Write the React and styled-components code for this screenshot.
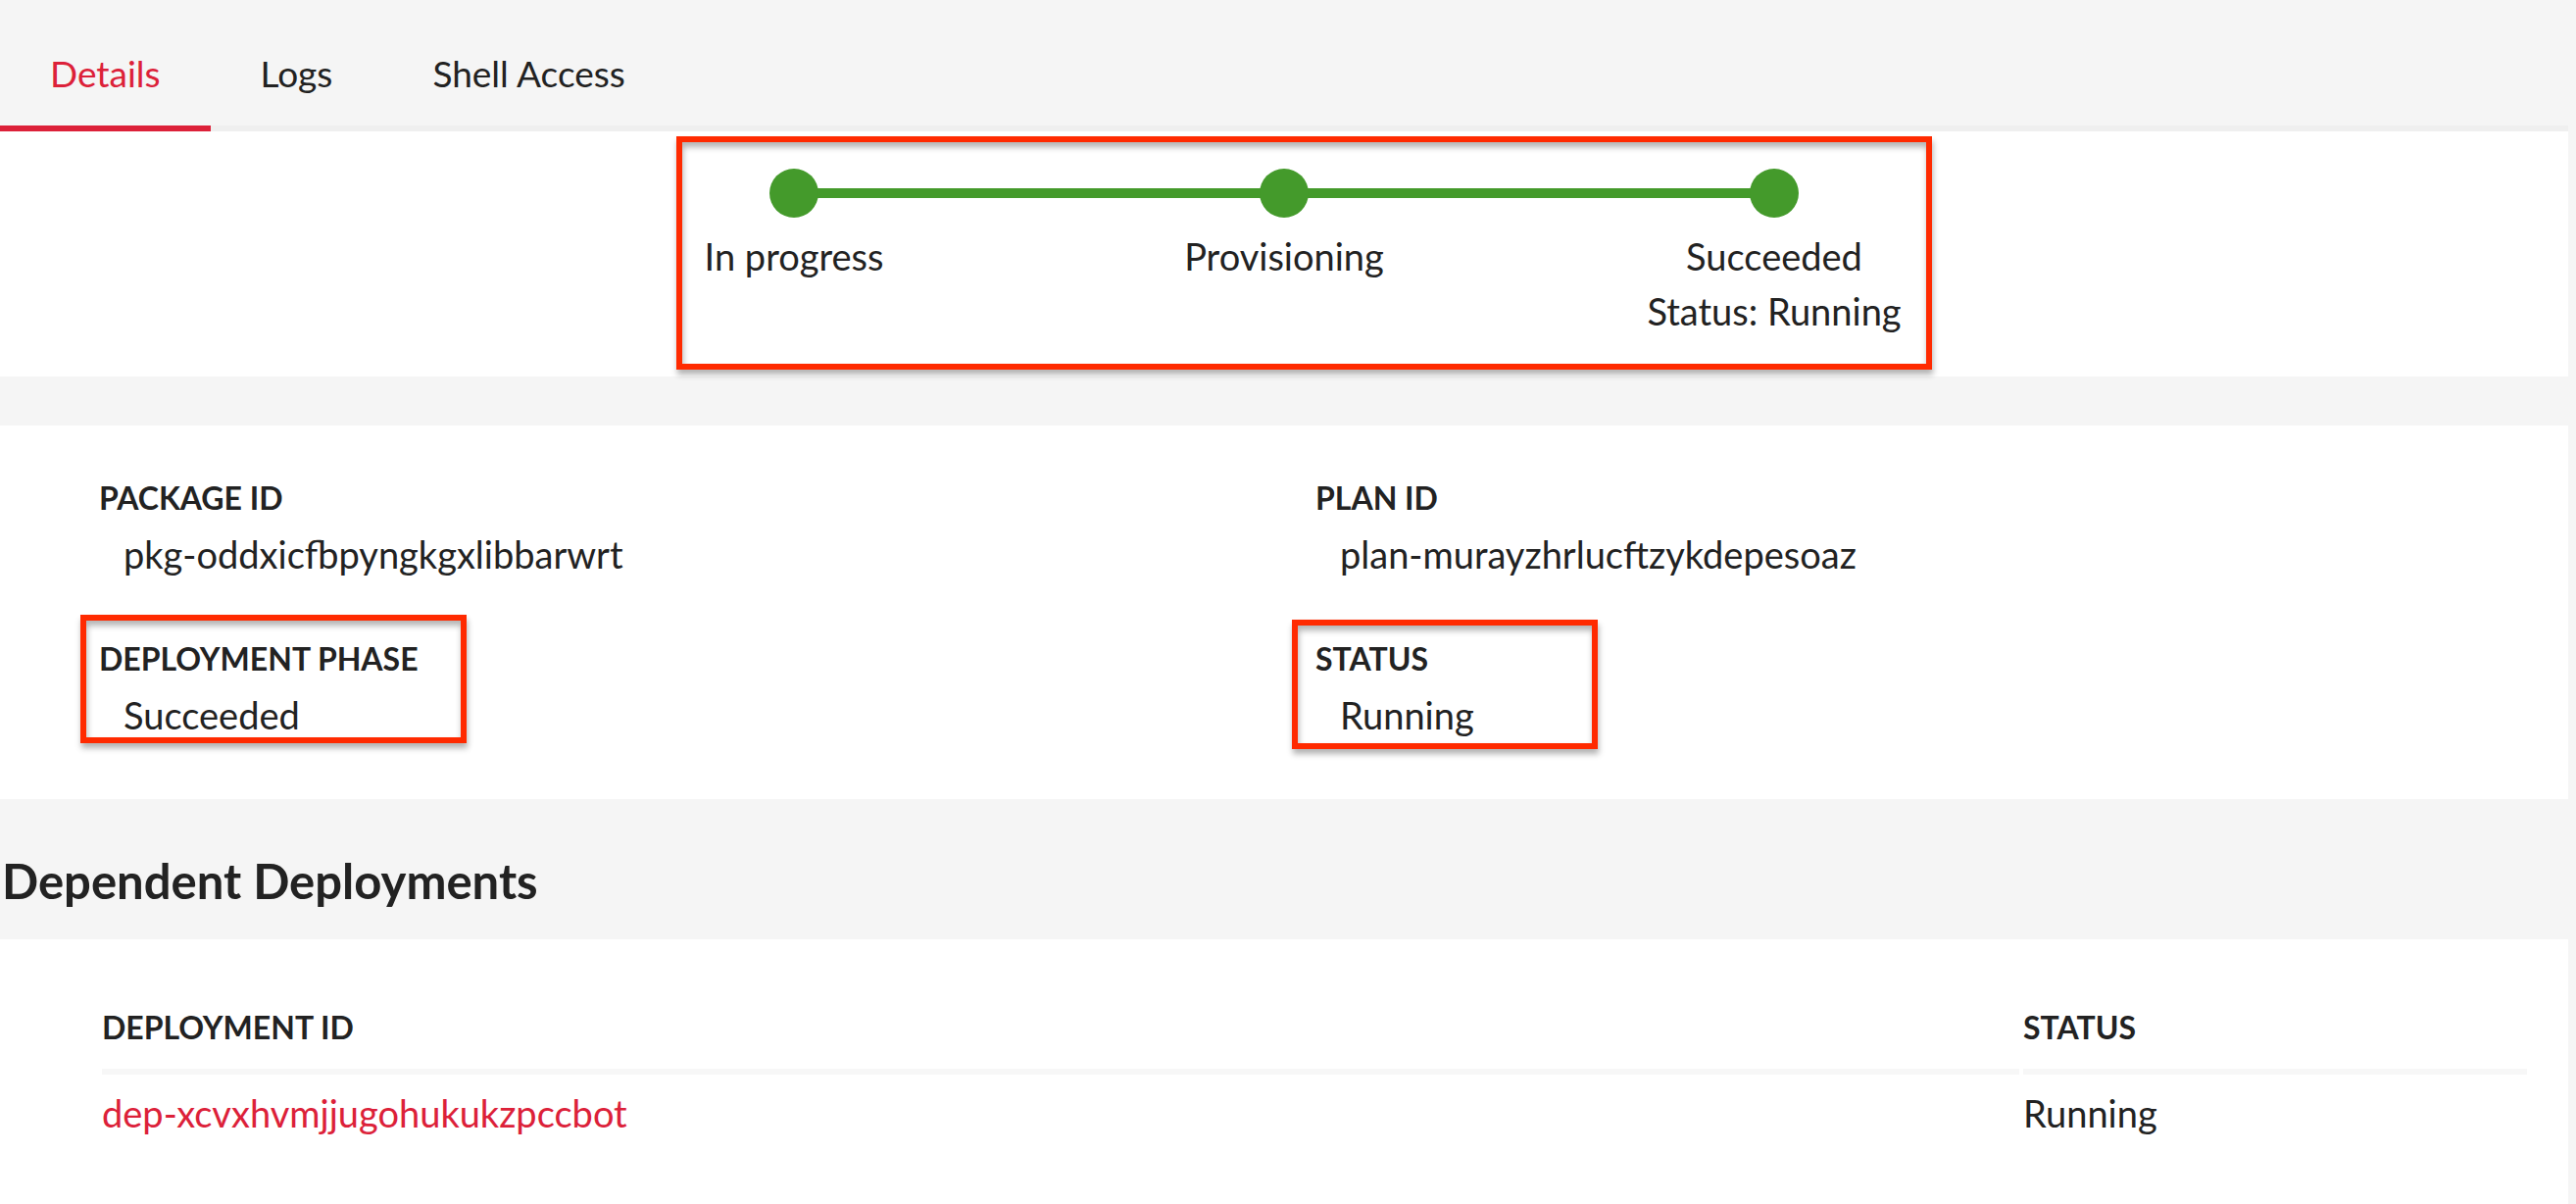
import React from 'react';
import styled, { createGlobalStyle } from 'styled-components';

const RED = '#dc2139';
const GREEN = '#449a2b';
const INK = '#222222';

const GlobalStyle = createGlobalStyle`
  html, body {
    margin: 0;
    padding: 0;
    background: #f5f5f5;
  }
  body {
    font-family: Lato, "Open Sans", sans-serif;
    color: ${INK};
  }
  * { box-sizing: border-box; }
`;

const Page = styled.div`
  width: 2620px;
  min-height: 1228px;
  background: #f5f5f5;
`;

const TabBar = styled.nav`
  display: flex;
  height: 134px;
  border-bottom: 6px solid #efefef;
  background: #f5f5f5;
`;

const Tab = styled.a`
  display: block;
  padding: 51px 51px 0;
  margin-bottom: -6px;
  border-bottom: 6px solid ${p => (p.$active ? RED : 'transparent')};
  color: ${p => (p.$active ? RED : INK)};
  font-size: 37px;
  line-height: 48px;
  text-decoration: none;
  cursor: pointer;
`;

/* annotation box drawn over content */
const highlight = `
  content: '';
  position: absolute;
  border: 6px solid #ff2a00;
  box-shadow: 1px 5px 6px rgba(0, 0, 0, 0.3), inset 1px 5px 6px rgba(0, 0, 0, 0.3);
  pointer-events: none;
`;

const TimelineCard = styled.section`
  height: 250px;
  background: #fff;
  padding-top: 38px;
  display: flex;
  align-items: flex-start;
  justify-content: center;
`;

const Stepper = styled.ol`
  position: relative;
  display: grid;
  grid-template-columns: repeat(3, 500px);
  margin: 0;
  padding: 0;
  list-style: none;

  &::before {
    content: '';
    position: absolute;
    top: 20px;
    left: 250px;
    right: 250px;
    height: 10px;
    background: ${GREEN};
  }

  &::after {
    ${highlight}
    left: 130px;
    right: 89px;
    top: -33px;
    bottom: -32px;
  }
`;

const Step = styled.li`
  position: relative;
  display: flex;
  flex-direction: column;
  align-items: center;
`;

const Dot = styled.span`
  width: 50px;
  height: 50px;
  border-radius: 50%;
  background: ${GREEN};
`;

const StepLabel = styled.span`
  margin-top: 11px;
  font-size: 38px;
  line-height: 56px;
  text-align: center;
`;

const Gap = styled.div`
  height: 50px;
`;

const DetailsCard = styled.section`
  height: 381px;
  background: #fff;
  padding: 54px 0 0 101px;
  display: grid;
  grid-template-columns: 1241px 1fr;
`;

const Column = styled.div`
  display: flex;
  flex-direction: column;
  gap: 63px;
`;

const Field = styled.div`
  position: relative;

  ${p =>
    p.$box &&
    `
    &::after {
      ${highlight}
      left: ${p.$box.left}px;
      width: ${p.$box.width}px;
      top: ${p.$box.top}px;
      bottom: ${p.$box.bottom}px;
    }
  `}
`;

const Label = styled.div`
  font-size: 32px;
  line-height: 40px;
  font-weight: 700;
  text-transform: uppercase;
`;

const Value = styled.div`
  margin-top: 13px;
  padding-left: 25px;
  font-size: 38px;
  line-height: 48px;
`;

const SectionTitle = styled.h2`
  height: 143px;
  margin: 0;
  padding: 53px 0 0 2px;
  font-size: 49px;
  line-height: 60px;
  font-weight: 700;
`;

const TableCard = styled.section`
  background: #fff;
  min-height: 270px;
  padding: 70px 42px 40px 104px;
`;

const Row = styled.div`
  display: grid;
  grid-template-columns: 1956px 1fr;
  column-gap: 4px;
`;

const HeadCell = styled.div`
  padding-bottom: 22px;
  border-bottom: 6px solid #f7f7f7;
  font-size: 32px;
  line-height: 40px;
  font-weight: 700;
  text-transform: uppercase;
`;

const Cell = styled.div`
  padding-top: 15px;
  font-size: 38px;
  line-height: 48px;
  color: ${p => (p.$link ? RED : INK)};
`;

const steps = [
  { label: 'In progress' },
  { label: 'Provisioning' },
  { label: 'Succeeded', extra: 'Status: Running' },
];

export default function App() {
  return (
    <Page>
      <GlobalStyle />
      <TabBar>
        <Tab $active>Details</Tab>
        <Tab>Logs</Tab>
        <Tab>Shell Access</Tab>
      </TabBar>

      <TimelineCard>
        <Stepper>
          {steps.map(s => (
            <Step key={s.label}>
              <Dot />
              <StepLabel>
                {s.label}
                {s.extra && <br />}
                {s.extra}
              </StepLabel>
            </Step>
          ))}
        </Stepper>
      </TimelineCard>

      <Gap />

      <DetailsCard>
        <Column>
          <Field>
            <Label>Package ID</Label>
            <Value>pkg-oddxicfbpyngkgxlibbarwrt</Value>
          </Field>
          <Field $box={{ left: -19, width: 382, top: -25, bottom: -5 }}>
            <Label>Deployment Phase</Label>
            <Value>Succeeded</Value>
          </Field>
        </Column>
        <Column>
          <Field>
            <Label>Plan ID</Label>
            <Value>plan-murayzhrlucftzykdepesoaz</Value>
          </Field>
          <Field $box={{ left: -24, width: 300, top: -20, bottom: -11 }}>
            <Label>Status</Label>
            <Value>Running</Value>
          </Field>
        </Column>
      </DetailsCard>

      <SectionTitle>Dependent Deployments</SectionTitle>

      <TableCard>
        <Row>
          <HeadCell>Deployment ID</HeadCell>
          <HeadCell>Status</HeadCell>
        </Row>
        <Row>
          <Cell $link>dep-xcvxhvmjjugohukukzpccbot</Cell>
          <Cell>Running</Cell>
        </Row>
      </TableCard>
    </Page>
  );
}
